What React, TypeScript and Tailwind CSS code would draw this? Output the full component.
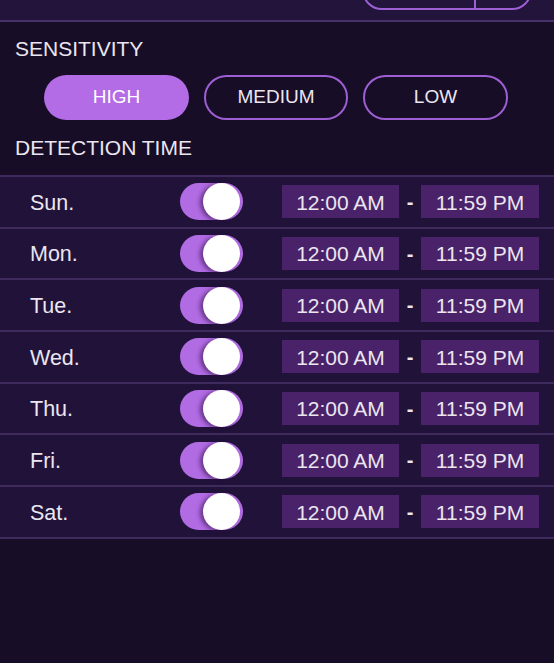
import React from "react";

const days = ["Sun.", "Mon.", "Tue.", "Wed.", "Thu.", "Fri.", "Sat."];

function Toggle() {
  return (
    <div className="relative w-[63px] h-[37px] rounded-full bg-[#b16be3] flex items-center justify-end pr-[3px]">
      <div className="w-[37px] h-[37px] rounded-full bg-white shadow-[-3px_1px_4px_rgba(40,10,60,0.55)]" />
    </div>
  );
}

export default function App() {
  return (
    <div
      className="w-[554px] h-[663px] bg-[#170d27] overflow-hidden text-[#ebe6f0]"
      style={{ fontFamily: '"Liberation Sans", Arial, sans-serif' }}
    >
      {/* top bar */}
      <div className="h-[22px] bg-[#22143a] border-b-2 border-[#46306a] overflow-hidden">
        <div className="flex ml-[362px] w-[170px] h-[40px] -mt-[30px] rounded-[20px] border-2 border-[#9d5fd3]">
          <div className="w-[112px] border-r-2 border-[#9d5fd3]" />
          <div className="flex-1 flex justify-center items-end pb-[8px] pr-[2px]">
            <div className="w-[5px] h-[5px] rounded-full bg-[#b06ae3]" />
          </div>
        </div>
      </div>

      <div className="px-[15px] mt-[15px] text-[21px] leading-[24px]">SENSITIVITY</div>

      <div className="flex gap-[15px] pl-[44px] mt-[14px]">
        <div className="w-[145px] h-[45px] rounded-full bg-[#b46be6] flex items-center justify-center text-[19px] text-white">
          HIGH
        </div>
        <div className="w-[144px] h-[45px] rounded-full border-2 border-[#9d5fd3] flex items-center justify-center text-[19px]">
          MEDIUM
        </div>
        <div className="w-[145px] h-[45px] rounded-full border-2 border-[#9d5fd3] flex items-center justify-center text-[19px]">
          LOW
        </div>
      </div>

      <div className="px-[15px] mt-[16px] text-[21px] leading-[24px]">DETECTION TIME</div>

      <div className="mt-[15px] border-b-2 border-[#3f2a5e]">
        {days.map((d) => (
          <div
            key={d}
            className="h-[51.7px] border-t-2 border-[#3f2a5e] bg-[#21123a] flex items-center"
          >
            <div className="w-[180px] pl-[30px] text-[21.5px] pt-[2px]">{d}</div>
            <Toggle />
            <div className="ml-[39px] w-[117px] h-[33px] bg-[#4a2269] flex items-center justify-center text-[21px] pt-[1px]">
              12:00 AM
            </div>
            <div className="w-[22px] text-center text-[20px] font-bold">-</div>
            <div className="w-[118px] h-[33px] bg-[#4a2269] flex items-center justify-center text-[21px] pt-[1px]">
              11:59 PM
            </div>
          </div>
        ))}
      </div>
    </div>
  );
}
